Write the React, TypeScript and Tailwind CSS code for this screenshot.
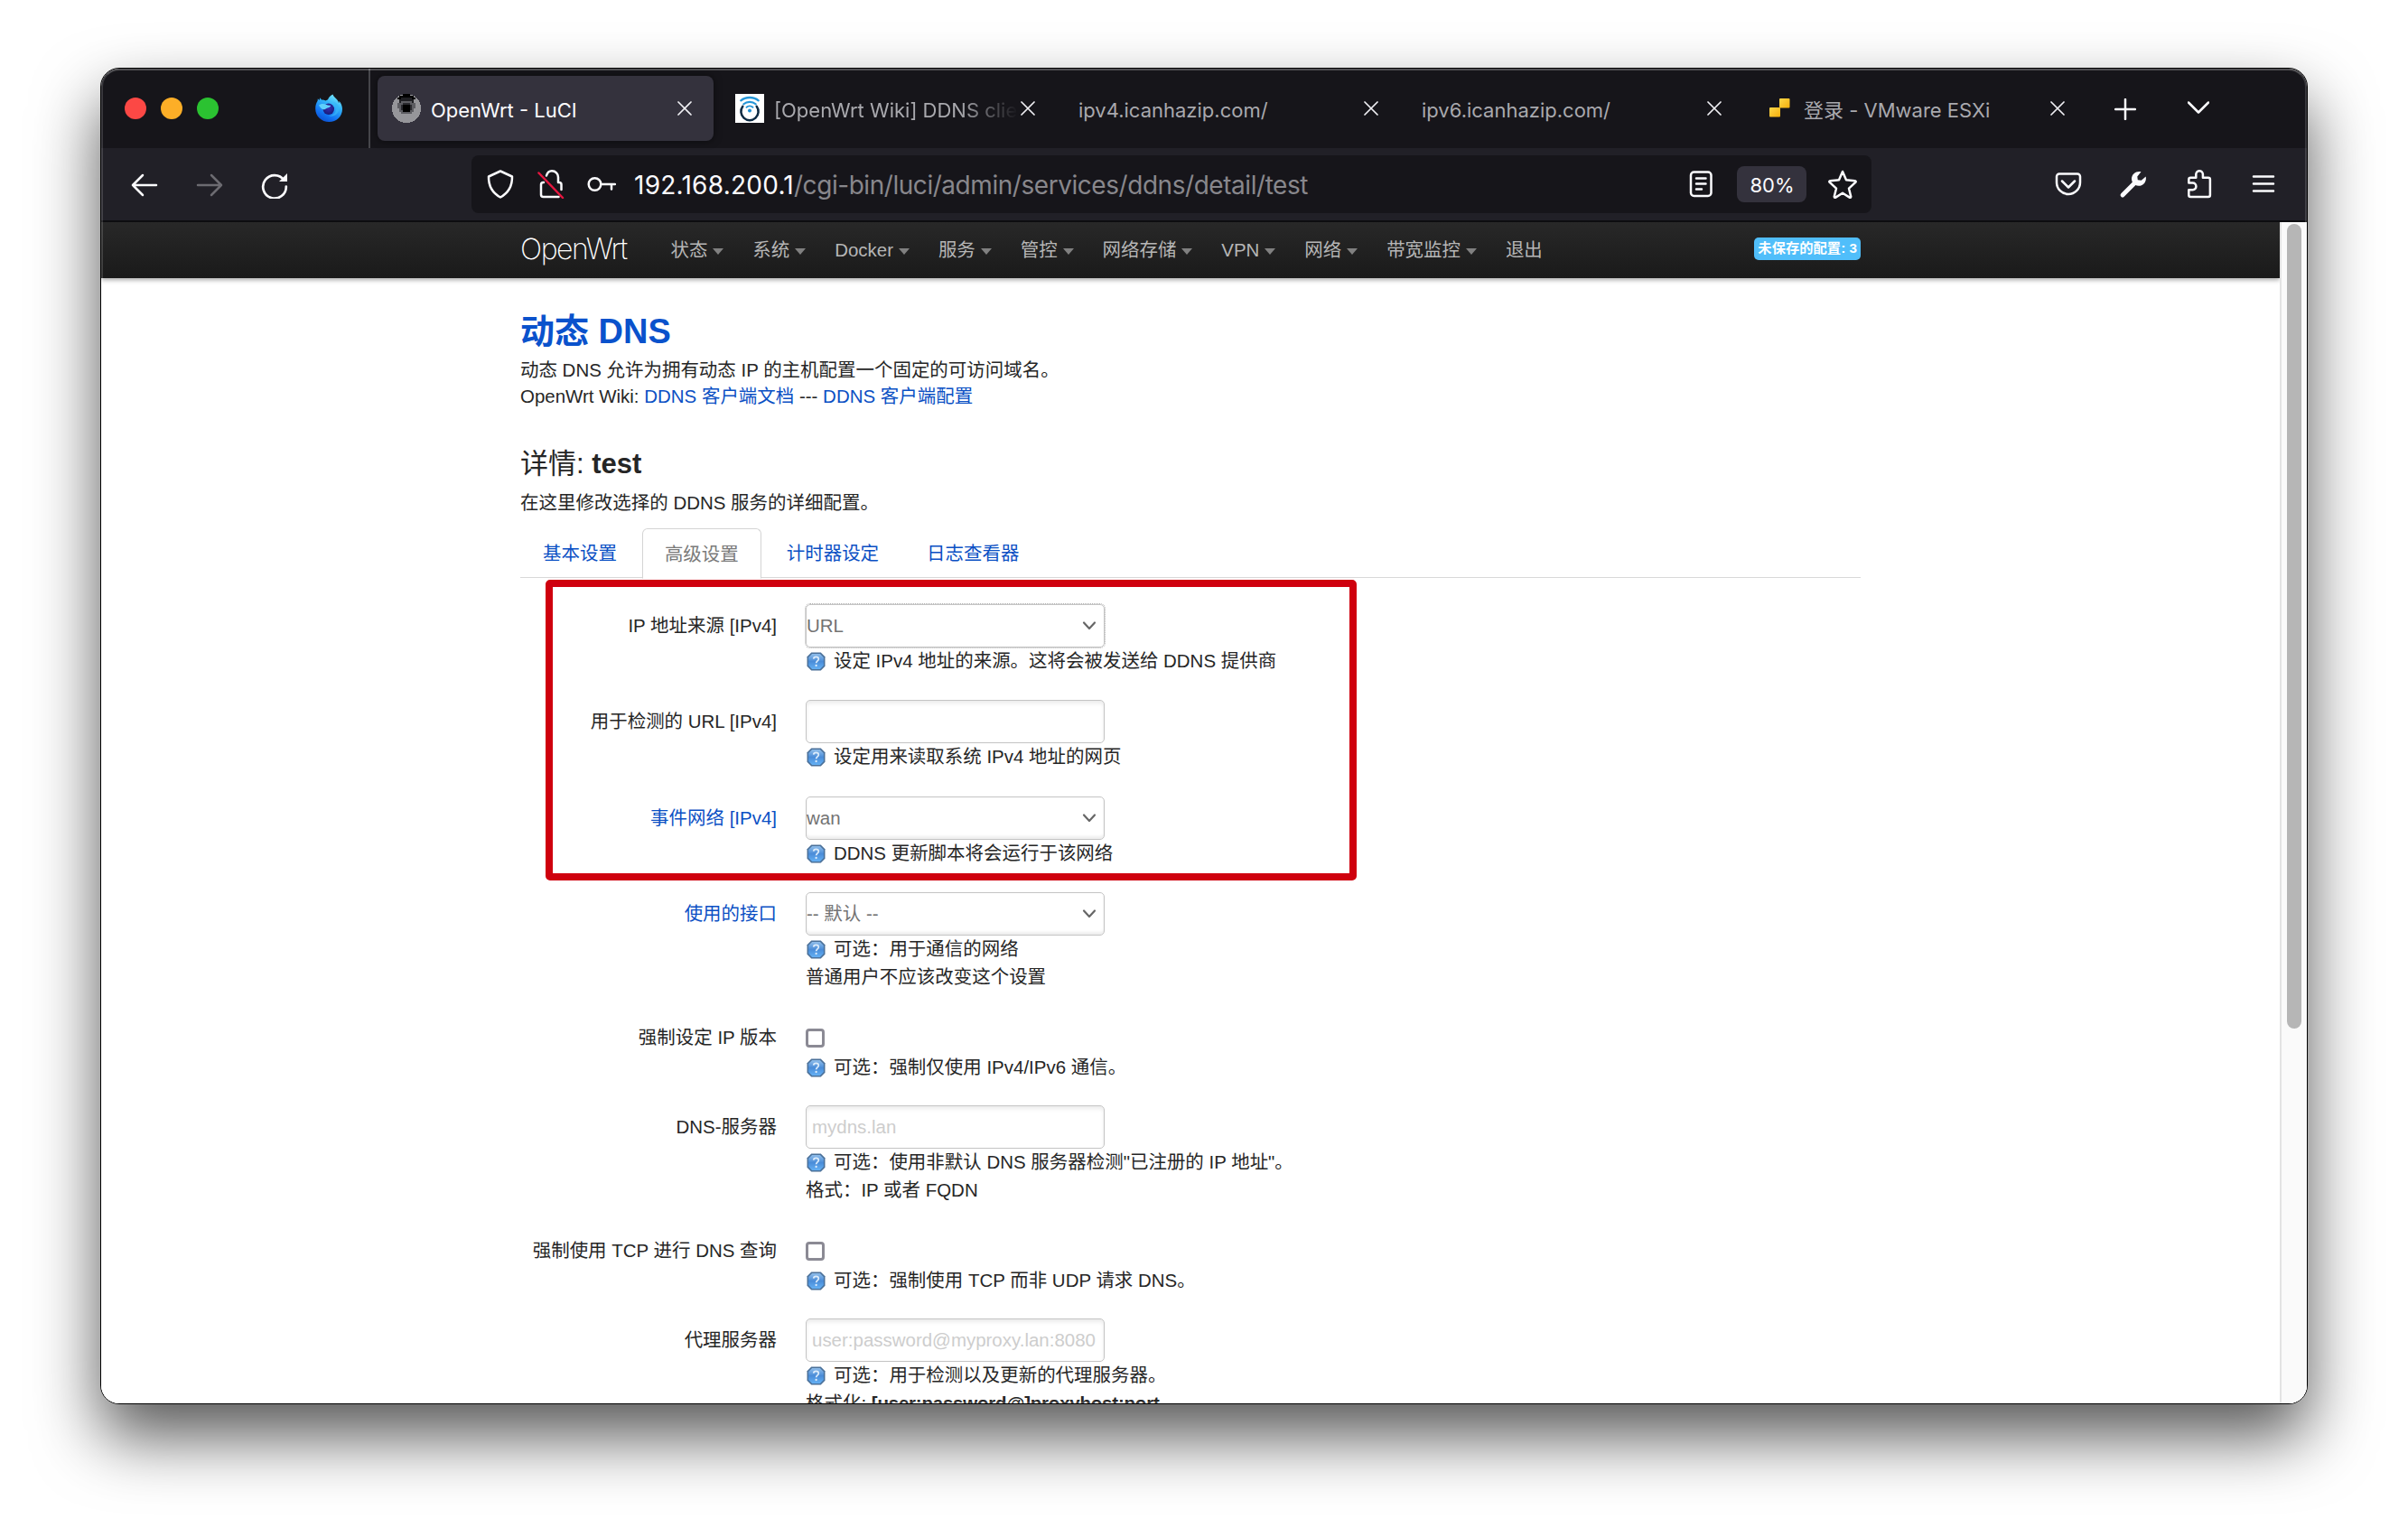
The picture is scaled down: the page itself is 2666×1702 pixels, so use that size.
import type { ReactNode } from "react";

const stroke = {
  fill: "none",
  stroke: "currentColor",
  strokeLinecap: "round" as const,
  strokeLinejoin: "round" as const,
};

function FirefoxIcon() {
  return (
    <svg viewBox="0 0 32 32" className="size-8">
      <defs>
        <linearGradient id="ffBody" x1="0.8" y1="0" x2="0.3" y2="1">
          <stop offset="0" stopColor="#7de9fb" />
          <stop offset="0.35" stopColor="#35b8fa" />
          <stop offset="0.75" stopColor="#1273f2" />
          <stop offset="1" stopColor="#0c4fd0" />
        </linearGradient>
        <radialGradient id="ffCore" cx="0.5" cy="0.4" r="0.6">
          <stop offset="0" stopColor="#3a2fb0" />
          <stop offset="1" stopColor="#171a78" />
        </radialGradient>
      </defs>
      <path
        d="M20.5 0.5c.6 2.6 3.4 3.9 5 6.3.9 1.2 1.3 2.2 1.6 3.4.5-1 .4-1.700.3-2.500 2.300 2.500 3.600 6 3.600 9C31 25 24.500 31 16.300 31 8 31 1.200 24.800 1.200 16.500c0-4 .9-6.500 2.400-8.700l.3-2.600 1.600 1.800.9-2.700 1.500 2.300c1.700-.2 3.300.1 4.600.9L15 6.300c1.200-3.200 3-4.500 5.500-5.800z"
        fill="url(#ffBody)"
      />
      <circle cx="15.800" cy="16.800" r="6.200" fill="url(#ffCore)" />
      <path
        d="M5 12.500c3-2 6-1.800 8.500-.6 1.800.8 4 .6 4.800 1.200-.4 1.700-2.600 2.100-4.300 2.600-1.300.5-2 1.500-3.800 1.600C8 17 6.500 15.200 5 12.500z"
        fill="#5fd0fb"
      />
      <path d="M20.500 8.500c2.800 2.500 4.500 5.500 3.600 9.500-.9 4-4.700 6.200-8.300 6.200 5.700 1.800 11-2 11.500-7.500.2-3.200-2.300-6.700-6.800-8.200z" fill="#37b5f8" opacity="0.7" />
    </svg>
  );
}

function LuciFavicon() {
  return (
    <svg viewBox="0 0 16 16" className="size-8 shrink-0" shapeRendering="crispEdges">
      <circle cx="8" cy="8" r="8" fill="#96969a" />
      <path d="M4 4h8v1h1v3h-1v2h-1v1H5v-1H4V8H3V5h1z" fill="#5d5d62" />
      <path d="M6 0h4v1h2v1h1v1h-2V2H5v1H3V2h1V1h2z" fill="#000" />
      <path d="M4 3h1V2h6v1h1v2h-1V4H5v1H4z" fill="#1f1f23" />
      <path d="M6 5h4v1h1v3h-1v1H6V9H5V6h1z" fill="#2a2a2f" />
      <rect x="6" y="6" width="4" height="4" fill="#000" />
    </svg>
  );
}

function WikiFavicon() {
  return (
    <svg viewBox="0 0 32 32" className="size-8 shrink-0 bg-white">
      <g fill="none" strokeLinecap="round">
        <path d="M8.300 13.800A9.600 9.600 0 1 0 23.700 13.800" stroke="#0c2a43" strokeWidth="2.500" />
        <path d="M6.300 7.300C11.500 2.800 20.500 2.800 25.700 7.300" stroke="#2596d8" strokeWidth="2.400" />
        <path d="M9.300 11.300C13 8 19 8 22.700 11.300" stroke="#2596d8" strokeWidth="2.200" />
        <path d="M12.500 14.800C14.500 13 17.500 13 19.500 14.800" stroke="#2596d8" strokeWidth="1.900" />
      </g>
      <circle cx="16" cy="18.500" r="2" fill="#1f8fd2" />
    </svg>
  );
}

function EsxiFavicon() {
  return (
    <svg viewBox="0 0 32 32" className="size-8 shrink-0">
      <defs>
        <linearGradient id="esx" x1="0" y1="0" x2="1" y2="1">
          <stop offset="0" stopColor="#ffd84a" />
          <stop offset="1" stopColor="#f3ae0c" />
        </linearGradient>
      </defs>
      <rect x="16" y="5" width="11.500" height="10.500" rx="1" fill="url(#esx)" />
      <rect x="5" y="15" width="12" height="10.500" rx="1" fill="url(#esx)" />
    </svg>
  );
}

function CloseIcon() {
  return (
    <svg viewBox="0 0 16 16" className="size-4 shrink-0 text-[#f0f0f4]" {...stroke} strokeWidth="1.700">
      <path d="M1 1l14 14M15 1L1 15" />
    </svg>
  );
}

function ToolIcon({ children, className = "" }: { children: ReactNode; className?: string }) {
  return (
    <svg viewBox="0 0 32 32" className={`size-8 shrink-0 ${className}`} {...stroke} strokeWidth="2.500">
      {children}
    </svg>
  );
}

function HelpIcon() {
  return (
    <svg viewBox="0 0 20 20" className="mr-[9px] ml-px size-[21px] shrink-0">
      <defs>
        <linearGradient id="help" x1="0" y1="0" x2="0" y2="1">
          <stop offset="0" stopColor="#8fbdea" />
          <stop offset="0.5" stopColor="#4a8cd8" />
          <stop offset="1" stopColor="#64b0f4" />
        </linearGradient>
      </defs>
      <path d="M5 .5h10L19.500 5v10L15 19.500H5L.5 15V5z" fill="#4a7099" />
      <path d="M5.800 2h8.400l3.800 3.800v8.400l-3.800 3.800h-8.400l-3.800-3.800v-8.400z" fill="url(#help)" />
      <path d="M7.300 7.300c.2-3 5.300-3 5.400.1 0 2-2.600 2.100-2.600 4.300" fill="none" stroke="#dcecfb" strokeWidth="1.600" />
      <circle cx="10.100" cy="14.300" r="1.100" fill="#dcecfb" />
    </svg>
  );
}

type Tab = { icon?: ReactNode; title: string; active?: boolean; fade?: boolean };

const tabs: Tab[] = [
  { icon: <LuciFavicon />, title: "OpenWrt - LuCI", active: true },
  { icon: <WikiFavicon />, title: "[OpenWrt Wiki] DDNS client", fade: true },
  { title: "ipv4.icanhazip.com/" },
  { title: "ipv6.icanhazip.com/" },
  { icon: <EsxiFavicon />, title: "登录 - VMware ESXi" },
];

function TabStrip() {
  return (
    <div className="flex h-[88px] items-center bg-[#16151a]">
      <div className="flex w-[296px] items-center pl-[26px]">
        <div className="flex gap-4">
          <span className="size-6 rounded-full bg-[#fc4845]" />
          <span className="size-6 rounded-full bg-[#fdae27]" />
          <span className="size-6 rounded-full bg-[#2bc231]" />
        </div>
        <div className="ml-[106px]">
          <FirefoxIcon />
        </div>
      </div>
      <div className="mr-2 h-full w-[2px] bg-[#46464b]" />
      <div className="flex gap-2">
        {tabs.map((t) => (
          <div
            key={t.title}
            className={`flex h-[72px] w-[372px] items-center rounded-lg pr-6 pl-4 ${
              t.active ? "bg-[#34323d] text-[#fbfbfe] shadow-[0_0_8px_rgba(0,0,0,0.5)]" : "text-[#a9a9ae]"
            }`}
          >
            {t.icon && <span className="mr-[11px]">{t.icon}</span>}
            <span
              className={`mt-[3px] min-w-0 flex-1 overflow-hidden text-[22px] leading-8 whitespace-nowrap ${
                t.fade ? "[mask-image:linear-gradient(to_right,black_205px,transparent_270px)]" : ""
              }`}
            >
              {t.title}
            </span>
            <CloseIcon />
          </div>
        ))}
      </div>
      <svg viewBox="0 0 24 24" className="mt-[2px] ml-[31px] size-6 text-[#fbfbfe]" {...stroke} strokeWidth="2.500">
        <path d="M12 1v22M1 12h22" />
      </svg>
      <svg viewBox="0 0 24 24" className="ml-[57px] size-6 text-[#fbfbfe]" {...stroke} strokeWidth="2.500">
        <path d="M1 5.500l11 11 11-11" />
      </svg>
    </div>
  );
}

function Toolbar() {
  return (
    <div className="flex h-[82px] items-center border-b-2 border-[#0d0d10] bg-[#212027] pl-8 text-[#fbfbfe]">
      <div className="flex gap-10">
        <ToolIcon>
          <path d="M29 17H3M14 6L3 17l11 11" />
        </ToolIcon>
        <ToolIcon className="text-[#6c6b71]">
          <path d="M3 17h26M18 6l11 11-11 11" />
        </ToolIcon>
        <ToolIcon>
          <path d="M26.500 11.500A12.800 12.800 0 1 0 28.800 18.500" strokeWidth="2.700" />
          <path d="M30 4v9h-9z" fill="currentColor" stroke="none" />
        </ToolIcon>
      </div>
      <div className="ml-[202px] flex h-16 w-[1550px] items-center rounded-lg bg-[#16151a] pr-4 pl-4">
        <div className="flex gap-6">
          <ToolIcon>
            <path d="M16 1.500l13 6c.2 9-3 17.500-13 23C6 25 2.800 16.500 3 7.500z" />
          </ToolIcon>
          <ToolIcon>
            <path d="M8 14h-.5a2.500 2.500 0 0 0-2.500 2.500v11A2.500 2.500 0 0 0 7.500 30h17M11 6.500C12 3 14 1.300 17 1.300c4 0 7 3 7 7V14h1a2.500 2.500 0 0 1 2.500 2.500V22" />
            <path d="M2.500 3.500L29 31" stroke="#e6163f" />
          </ToolIcon>
          <ToolIcon>
            <circle cx="8.500" cy="16" r="6.800" />
            <path d="M15.500 16H31M27 16v5.500" />
          </ToolIcon>
        </div>
        <div className="ml-5 flex-1 pt-[2px] text-[28px] leading-10 whitespace-nowrap text-[#88878c]">
          <span className="tracking-[0.25px] text-[#fbfbfe]">192.168.200.1</span>
          <span className="tracking-[-0.45px]">/cgi-bin/luci/admin/services/ddns/detail/test</span>
        </div>
        <ToolIcon>
          <rect x="5" y="2.500" width="22.500" height="26.500" rx="3.500" />
          <path d="M11 9.500h10.500M11 15.500h10.500M11 21.500h6" />
        </ToolIcon>
        <div className="mr-6 ml-6 flex h-10 w-[77px] items-center justify-center rounded-lg bg-[#34323d] pt-[2px] pl-px text-[22px]">80%</div>
        <ToolIcon>
          <path d="M16 2l4 9.300 9.700.9c1 .1 1.300 1 .6 1.700l-7.300 6.800 2.200 8.800c.2 1-.7 1.600-1.500 1.100L16 25.800l-7.700 4.800c-.8.5-1.700-.1-1.500-1.100L9 20.700l-7.300-6.800c-.7-.7-.4-1.600.6-1.700l9.700-.9z" />
        </ToolIcon>
      </div>
      <div className="ml-[202px] flex gap-10">
        <ToolIcon>
          <path d="M6 4.500h20a3 3 0 0 1 3 3V14a13 13 0 0 1-26 0V7.500a3 3 0 0 1 3-3z" />
          <path d="M9 12.500l7 7 7-7" />
        </ToolIcon>
        <ToolIcon>
          <path d="M4 28L16.500 15.500" strokeWidth="4.800" />
          <path
            d="M24.500 2.300l-4.200 5.200.5 3.800 3.900.4 5-4.300c1.300 5.300-2.600 10.600-8.200 10.400-4.500-.2-7.600-3.600-7.500-8C14.200 4.500 19.500.9 24.500 2.300z"
            fill="currentColor"
            stroke="none"
          />
        </ToolIcon>
        <ToolIcon>
          <path d="M7.300 8.800h6V5a3.800 3.800 0 0 1 7.600 0v3.800h6a2 2 0 0 1 2 2V28a2 2 0 0 1-2 2H7.300a2 2 0 0 1-2-2v-5.800h4.300a3.800 3.800 0 0 0 0-7.600H5.300v-3.800a2 2 0 0 1 2-2z" />
        </ToolIcon>
        <ToolIcon>
          <path d="M5 7.500h22M5 15.500h22M5 23.500h22" />
        </ToolIcon>
      </div>
    </div>
  );
}

const menu = ["状态", "系统", "Docker", "服务", "管控", "网络存储", "VPN", "网络", "带宽监控"];

function NavBar() {
  return (
    <div className="flex h-[62px] shrink-0 items-center bg-gradient-to-b from-[#282828] to-[#1a1a1a] pr-[464px] pl-[464px] text-[20.480px] text-[#b6b6b6] shadow-[0_2px_5px_rgba(0,0,0,0.35)]">
      <span className="w-[150.500px] pb-[2px] font-[Inter] text-[32px] leading-none font-extralight tracking-[-1.450px] text-white">
        OpenWrt
      </span>
      {menu.map((m) => (
        <span key={m} className="flex items-center px-4 whitespace-nowrap">
          {m}
          <span className="mt-[2px] ml-[5.900px] border-x-[6.400px] border-t-[7px] border-x-transparent border-t-[#808080]" />
        </span>
      ))}
      <span className="px-4">退出</span>
      <span className="mb-[3px] ml-auto flex h-[25px] items-center rounded-[5px] bg-[#50befa] px-1 text-[15.300px] font-bold whitespace-nowrap text-white">
        未保存的配置: 3
      </span>
    </div>
  );
}

const box = "flex h-[48px] w-[331px] items-center rounded-[5px] border-[1.600px] border-[#c4c4c4] bg-white";

function SelectBox({ value, focused }: { value: string; focused?: boolean }) {
  return (
    <div
      className={`${box} justify-between pr-2 text-[#737373] ${
        focused ? "outline-1 outline-dotted outline-[#b0b0b0]" : "shadow-[inset_0_-3px_3px_rgba(0,0,0,0.07)]"
      }`}
    >
      <span>{value}</span>
      <svg viewBox="0 0 16 16" className="size-4 text-[#666]" {...stroke} strokeWidth="2.200">
        <path d="M2 4.500l6 6.500 6-6.500" />
      </svg>
    </div>
  );
}

function TextBox({ placeholder = "" }: { placeholder?: string }) {
  return (
    <div className={`${box} px-[6px] whitespace-nowrap text-[#cdcdcd] shadow-[inset_0_3px_4px_rgba(0,0,0,0.08)]`}>
      {placeholder}
    </div>
  );
}

function CheckBox() {
  return (
    <div className="flex h-[42px] items-center pt-[6px]">
      <span className="size-[21px] rounded-[4px] border-[3px] border-[#8b8a94] bg-white" />
    </div>
  );
}

type Field = {
  label: string;
  link?: boolean;
  control: ReactNode;
  help: string;
  extra?: ReactNode;
  height: string;
};

const fields: Field[] = [
  { label: "IP 地址来源 [IPv4]", control: <SelectBox value="URL" focused />, help: "设定 IPv4 地址的来源。这将会被发送给 DDNS 提供商", height: "h-[106px]" },
  { label: "用于检测的 URL [IPv4]", control: <TextBox />, help: "设定用来读取系统 IPv4 地址的网页", height: "h-[107px]" },
  { label: "事件网络 [IPv4]", link: true, control: <SelectBox value="wan" />, help: "DDNS 更新脚本将会运行于该网络", height: "h-[106px]" },
  { label: "使用的接口", link: true, control: <SelectBox value="-- 默认 --" />, help: "可选：用于通信的网络", extra: "普通用户不应该改变这个设置", height: "h-[137px]" },
  { label: "强制设定 IP 版本", control: <CheckBox />, help: "可选：强制仅使用 IPv4/IPv6 通信。", height: "h-[99px]" },
  { label: "DNS-服务器", control: <TextBox placeholder="mydns.lan" />, help: '可选：使用非默认 DNS 服务器检测"已注册的 IP 地址"。', extra: "格式：IP 或者 FQDN", height: "h-[137px]" },
  { label: "强制使用 TCP 进行 DNS 查询", control: <CheckBox />, help: "可选：强制使用 TCP 而非 UDP 请求 DNS。", height: "h-[99px]" },
  {
    label: "代理服务器",
    control: <TextBox placeholder="user:password@myproxy.lan:8080" />,
    help: "可选：用于检测以及更新的代理服务器。",
    extra: (
      <>
        格式化: <b className="tracking-[-0.2px]">[user:password@]proxyhost:port</b>
      </>
    ),
    height: "h-[137px]",
  },
];

function FieldRow({ f }: { f: Field }) {
  return (
    <div className={`flex ${f.height}`}>
      <div className={`w-[284px] pt-[9px] text-right leading-[29px] ${f.link ? "text-[#0b50c4]" : "text-[#262626]"}`}>{f.label}</div>
      <div className="ml-8 whitespace-nowrap text-[#262626]">
        {f.control}
        <div className="flex h-[31px] items-center">
          <HelpIcon />
          {f.help}
        </div>
        {f.extra && <div className="leading-[30px]">{f.extra}</div>}
      </div>
    </div>
  );
}

const pageTabs = ["基本设置", "高级设置", "计时器设定", "日志查看器"];

function Page() {
  return (
    <div className="flex h-[1308px] bg-white">
      <div className="flex min-w-0 flex-1 flex-col overflow-hidden font-['Liberation_Sans','Noto_Sans_CJK_SC',sans-serif] text-[20.480px] text-[#262626]">
        <NavBar />
        <div className="relative mx-[464px] pt-[30px]">
          <h2 className="text-[38px] leading-[58px] font-bold text-[#0a52cc]">动态 DNS</h2>
          <p className="-mt-px leading-[29px]">
            动态 DNS 允许为拥有动态 IP 的主机配置一个固定的可访问域名。
            <br />
            OpenWrt Wiki: <span className="text-[#0b50c4]">DDNS 客户端文档</span> --- <span className="text-[#0b50c4]">DDNS 客户端配置</span>
          </p>
          <h3 className="mt-[41px] text-[31px] leading-[40px]">
            详情: <b>test</b>
          </h3>
          <p className="mt-[8px] leading-[30px]">在这里修改选择的 DDNS 服务的详细配置。</p>
          <div className="mt-[13px] flex h-[55px] gap-[3px] border-b-[1.600px] border-[#d8d8d8]">
            {pageTabs.map((t, i) => (
              <span
                key={t}
                className={`flex items-center rounded-t-md border-[1.600px] px-6 pt-[3px] ${
                  i === 1 ? "-mb-[2px] border-[#d4d4d4] border-b-white bg-white text-[#7a7a7a]" : "border-transparent text-[#0b50c4]"
                }`}
              >
                {t}
              </span>
            ))}
          </div>
          <div className="pt-[29px]">
            {fields.map((f) => (
              <FieldRow key={f.label} f={f} />
            ))}
          </div>
          <div className="absolute top-[334px] left-7 h-[333px] w-[898px] rounded-[5px] border-8 border-[#cf000e]" />
        </div>
      </div>
      <div className="w-[30px] border-l-2 border-[#e3e3e3] bg-[#fafafa] pt-[2px] pl-[6px]">
        <div className="h-[891px] w-4 rounded-full bg-[#b6b6b6]" />
      </div>
    </div>
  );
}

export default function App() {
  return (
    <div className="h-[1702px] w-[2666px] overflow-hidden bg-white pt-[75px] pl-[111px] font-['Inter','Noto_Sans_CJK_SC',sans-serif]">
      <div className="relative h-[1480px] w-[2444px] overflow-hidden rounded-[21px] border border-black bg-white shadow-[0_36px_72px_rgba(0,0,0,0.66)]">
        <TabStrip />
        <Toolbar />
        <Page />
        <div className="pointer-events-none absolute inset-0 rounded-[20px] border-2 border-white/15 border-t-white/25" />
      </div>
    </div>
  );
}
